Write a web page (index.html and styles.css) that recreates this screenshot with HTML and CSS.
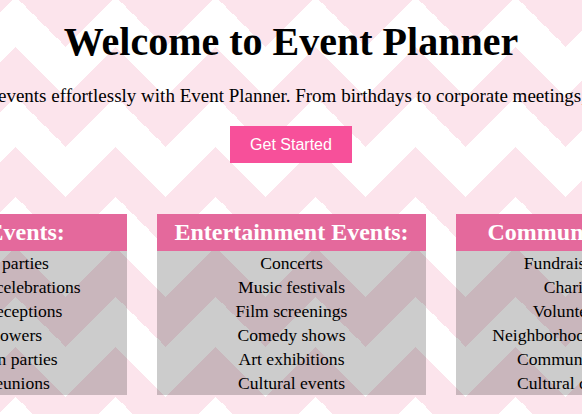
FILE: index.html
```html
<!DOCTYPE html>
<html lang="en">
<head>
<meta charset="utf-8">
<title>Event Planner</title>
<link rel="stylesheet" href="styles.css">
</head>
<body>
<main class="page">
  <h1 class="title">Welcome to Event Planner</h1>
  <p class="intro">Plan your events effortlessly with Event Planner. From birthdays to corporate meetings, and more.</p>
  <button class="cta" type="button">Get Started</button>
  <section class="cards">
    <article class="card">
      <h2 class="card-title">Social Events:</h2>
      <ul class="card-list">
        <li>Birthday parties</li>
        <li>Anniversary celebrations</li>
        <li>Wedding receptions</li>
        <li>Baby showers</li>
        <li>Graduation parties</li>
        <li>Family reunions</li>
      </ul>
    </article>
    <article class="card">
      <h2 class="card-title">Entertainment Events:</h2>
      <ul class="card-list">
        <li>Concerts</li>
        <li>Music festivals</li>
        <li>Film screenings</li>
        <li>Comedy shows</li>
        <li>Art exhibitions</li>
        <li>Cultural events</li>
      </ul>
    </article>
    <article class="card">
      <h2 class="card-title">Community Events:</h2>
      <ul class="card-list">
        <li>Fundraising events</li>
        <li>Charity galas</li>
        <li>Volunteer drives</li>
        <li>Neighborhood block parties</li>
        <li>Community festivals</li>
        <li>Cultural celebrations</li>
      </ul>
    </article>
  </section>
</main>
</body>
</html>
```

FILE: styles.css
```css
html {
  background-color: #ffffff;
  background-image:
    linear-gradient(135deg, #fce4ec 25%, transparent 25%),
    linear-gradient(225deg, #fce4ec 25%, transparent 25%),
    linear-gradient(315deg, #fce4ec 25%, transparent 25%),
    linear-gradient(45deg, #fce4ec 25%, transparent 25%);
  background-size: 100px 100px;
  background-position: -34px -3px, -34px -3px, 16px -3px, 16px -3px;
}

body {
  margin: 0;
  font-family: "Liberation Serif", "Times New Roman", serif;
  color: #000;
  overflow: hidden;
}

.page {
  display: flex;
  flex-direction: column;
  align-items: center;
}

.title {
  margin: 18px 0 0;
  font-size: 40px;
  font-weight: bold;
  white-space: nowrap;
}

.intro {
  margin: 20px 0 0 4.5px;
  font-size: 19px;
  white-space: nowrap;
}

.cta {
  margin-top: 19px;
  padding: 9px 20px;
  border: 0;
  border-radius: 0;
  background: #f7509a;
  color: #fff;
  font-family: "Liberation Sans", Arial, sans-serif;
  font-size: 16px;
  line-height: 19px;
}

.cards {
  display: flex;
  gap: 30px;
  margin-top: 51px;
  margin-left: 1px;
}

.card {
  flex: 0 0 269px;
  background: rgba(0, 0, 0, 0.2);
  text-align: center;
}

.card-title {
  margin: 0;
  padding: 5px 0;
  background: #e4699c;
  color: #fff;
  font-size: 24px;
  line-height: 27px;
  white-space: nowrap;
}

.card-list {
  margin: 0;
  padding: 0;
  list-style: none;
  font-size: 17.6px;
  line-height: 24px;
}
```
